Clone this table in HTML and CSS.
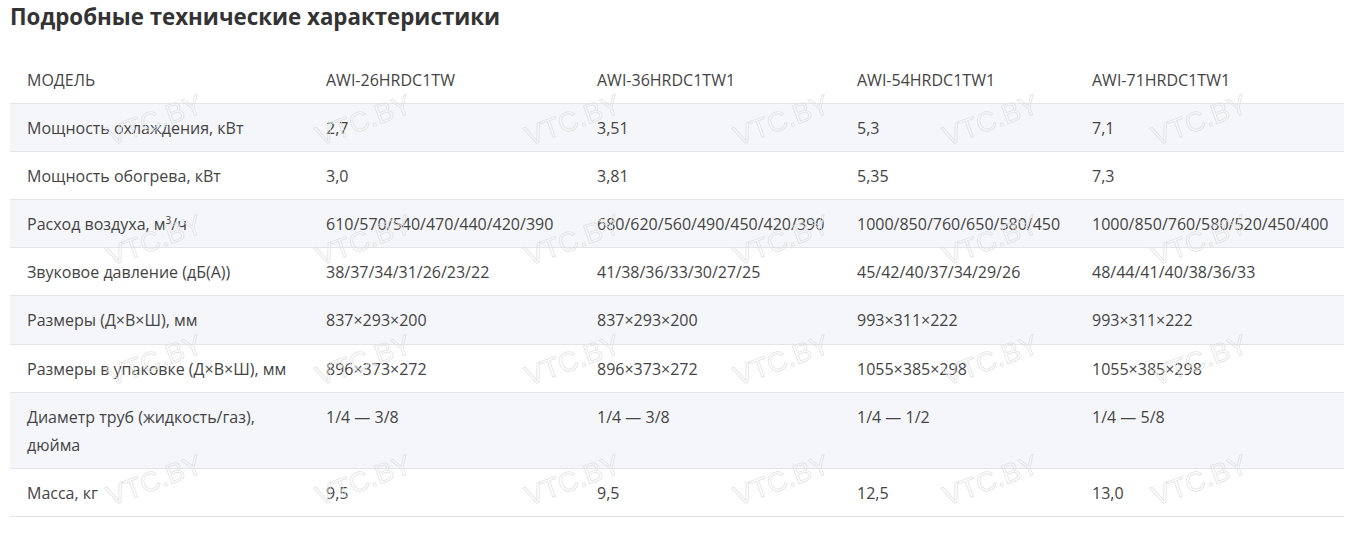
FILE: index.html
```html
<!DOCTYPE html>
<html lang="ru">
<head>
<meta charset="utf-8">
<title>Подробные технические характеристики</title>
<link rel="stylesheet" href="styles.css">
</head>
<body>
<div class="page">
  <h2 class="title">Подробные технические характеристики</h2>
  <div class="table-wrap">
    <table class="specs">
      <colgroup>
        <col class="c1"><col class="c2"><col class="c3"><col class="c4"><col class="c5">
      </colgroup>
      <thead>
        <tr><th>МОДЕЛЬ</th><th>AWI-26HRDC1TW</th><th>AWI-36HRDC1TW1</th><th>AWI-54HRDC1TW1</th><th>AWI-71HRDC1TW1</th></tr>
      </thead>
      <tbody>
        <tr><td>Мощность охлаждения, кВт</td><td>2,7</td><td>3,51</td><td>5,3</td><td>7,1</td></tr>
        <tr><td>Мощность обогрева, кВт</td><td>3,0</td><td>3,81</td><td>5,35</td><td>7,3</td></tr>
        <tr><td>Расход воздуха, м<sup>3</sup>/ч</td><td>610/570/540/470/440/420/390</td><td>680/620/560/490/450/420/390</td><td>1000/850/760/650/580/450</td><td>1000/850/760/580/520/450/400</td></tr>
        <tr><td>Звуковое давление (дБ(А))</td><td>38/37/34/31/26/23/22</td><td>41/38/36/33/30/27/25</td><td>45/42/40/37/34/29/26</td><td>48/44/41/40/38/36/33</td></tr>
        <tr class="tall"><td>Размеры (Д×В×Ш), мм</td><td>837×293×200</td><td>837×293×200</td><td>993×311×222</td><td>993×311×222</td></tr>
        <tr><td>Размеры в упаковке (Д×В×Ш), мм</td><td>896×373×272</td><td>896×373×272</td><td>1055×385×298</td><td>1055×385×298</td></tr>
        <tr><td>Диаметр труб (жидкость/газ), дюйма</td><td>1/4 — 3/8</td><td>1/4 — 3/8</td><td>1/4 — 1/2</td><td>1/4 — 5/8</td></tr>
        <tr><td>Масса, кг</td><td>9,5</td><td>9,5</td><td>12,5</td><td>13,0</td></tr>
      </tbody>
    </table>
  </div>
</div>
</body>
</html>
```
FILE: styles.css
```css
html, body {
  margin: 0;
  padding: 0;
  background: #fff;
}
.page {
  padding: 0 10px;
  font-family: "Open Sans", "Noto Sans", sans-serif;
  color: #444;
}
.title {
  margin: 0;
  padding-top: 2px;
  height: 54px;
  font-size: 22.3px;
  font-weight: 700;
  line-height: 30px;
  color: #333;
}
.table-wrap {
  position: relative;
}
.table-wrap::after {
  content: "";
  position: absolute;
  inset: 0;
  pointer-events: none;
  background-image: url("data:image/svg+xml;utf8,<svg xmlns='http://www.w3.org/2000/svg' width='209' height='120'><text x='101' y='90' transform='rotate(-20 101 90)' font-family='Liberation Sans, Arial, sans-serif' font-size='27.5' fill='none' stroke='%23e0e0e0' stroke-width='0.7'>VTC.BY</text></svg>");
  background-repeat: repeat;
  background-position: 0 0;
}
.specs {
  width: 100%;
  border-collapse: collapse;
  table-layout: fixed;
  font-size: 16px;
  line-height: 28px;
}
.c1 { width: 299px; }
.c2 { width: 271px; }
.c3 { width: 260px; }
.c4 { width: 235px; }
.c5 { width: 269px; }
.specs th,
.specs td {
  text-align: left;
  font-weight: 400;
  vertical-align: top;
  padding: 10px 8px 9px 17px;
  border-bottom: 1px solid #e4e4e7;
}
.specs tr.tall td {
  padding-bottom: 10px;
}
.specs tbody tr:nth-child(odd) {
  background: #f5f6fa;
}
.specs sup {
  font-size: 10px;
  line-height: 0;
  vertical-align: 6px;
}
```
